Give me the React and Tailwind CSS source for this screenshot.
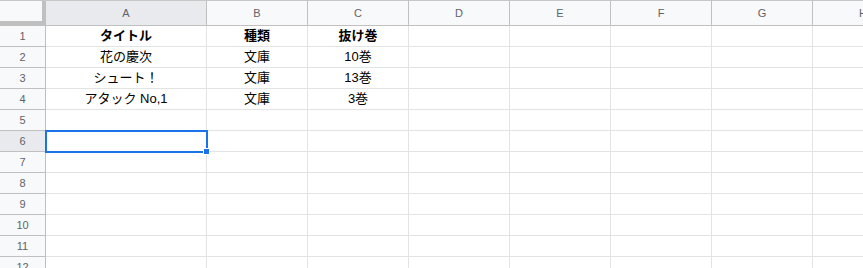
import React from 'react';

const cols = ['A', 'B', 'C', 'D', 'E', 'F', 'G', 'H'];
const widths = ['w-[161px]', 'w-[101px]', 'w-[101px]', 'w-[101px]', 'w-[101px]', 'w-[101px]', 'w-[101px]', 'w-[101px]'];

// 表の中身（空欄は ''）
const data = [
  ['タイトル', '種類', '抜け巻'],
  ['花の慶次', '文庫', '10巻'],
  ['シュート！', '文庫', '13巻'],
  ['アタック No,1', '文庫', '3巻'],
];

const rowCount = 12;
const selRow = 6;

const App = () => {
  return (
    <div
      className="w-[863px] h-[268px] overflow-hidden bg-white border-t border-[#c7c7c7]"
      style={{ fontFamily: '"Liberation Sans", "Noto Sans CJK JP", Arial, sans-serif' }}
    >
      {/* 列ヘッダー */}
      <div className="flex h-[25px] border-b border-[#c0c0c0] bg-[#f8f9fa]">
        <div className="w-[46px] shrink-0 h-full border-r-4 border-b-4 border-[#c0c0c0] bg-[#f8f9fa] box-border" />
        {cols.map((c, i) => (
          <div
            key={c}
            className={`${widths[i]} shrink-0 h-full border-r border-[#c0c0c0] flex items-center justify-center text-[11px] text-[#5f6368] ${i === 0 ? 'bg-[#e8eaed]' : ''}`}
          >
            {c}
          </div>
        ))}
      </div>

      {/* 行 */}
      {Array.from({ length: rowCount }, (_, r) => {
        const n = r + 1;
        const row = data[r] || [];
        return (
          <div key={n} className="flex h-[21px]">
            <div
              className={`w-[46px] shrink-0 h-full border-r border-b border-[#c0c0c0] flex items-center justify-center text-[11px] text-[#5f6368] ${n === selRow ? 'bg-[#e8eaed]' : 'bg-[#f8f9fa]'}`}
            >
              {n}
            </div>
            {cols.map((c, i) => (
              <div
                key={c}
                className={`${widths[i]} shrink-0 h-full relative border-r border-b border-[#e2e3e3] flex items-center justify-center text-[13px] text-black ${n === 1 ? 'font-bold' : ''}`}
              >
                {row[i] || ''}
                {n === selRow && i === 0 && (
                  <>
                    <div className="absolute -left-px -top-px w-[163px] h-[23px] border-2 border-[#1a73e8] pointer-events-none" />
                    <div className="absolute -right-[4px] -bottom-[4px] w-[7px] h-[7px] bg-[#1a73e8] border border-white z-10" />
                  </>
                )}
              </div>
            ))}
          </div>
        );
      })}
    </div>
  );
};

export default App;
